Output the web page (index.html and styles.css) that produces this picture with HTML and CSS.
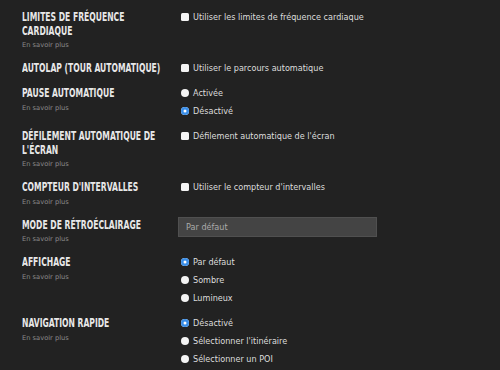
FILE: index.html
```html
<!DOCTYPE html>
<html lang="fr">
<head>
    <meta charset="UTF-8">
    <title>Paramètres d'activité</title>
    <link rel="stylesheet" href="styles.css">
</head>
<body>
    <div class="settings">
        <div class="row">
            <div class="label">
                <div class="title"><span>LIMITES DE FRÉQUENCE</span><span>CARDIAQUE</span></div>
                <a class="more" href="#">En savoir plus</a>
            </div>
            <div class="controls">
                <label class="option"><input type="checkbox"> Utiliser les limites de fréquence cardiaque</label>
            </div>
        </div>

        <div class="row">
            <div class="label">
                <div class="title"><span>AUTOLAP (TOUR AUTOMATIQUE)</span></div>
            </div>
            <div class="controls">
                <label class="option"><input type="checkbox"> Utiliser le parcours automatique</label>
            </div>
        </div>

        <div class="row">
            <div class="label">
                <div class="title"><span>PAUSE AUTOMATIQUE</span></div>
                <a class="more" href="#">En savoir plus</a>
            </div>
            <div class="controls">
                <label class="option"><input type="radio" name="pause"> Activée</label>
                <label class="option"><input type="radio" name="pause" checked> Désactivé</label>
            </div>
        </div>

        <div class="row">
            <div class="label">
                <div class="title"><span>DÉFILEMENT AUTOMATIQUE DE</span><span>L'ÉCRAN</span></div>
                <a class="more" href="#">En savoir plus</a>
            </div>
            <div class="controls">
                <label class="option"><input type="checkbox"> Défilement automatique de l'écran</label>
            </div>
        </div>

        <div class="row">
            <div class="label">
                <div class="title"><span>COMPTEUR D'INTERVALLES</span></div>
                <a class="more" href="#">En savoir plus</a>
            </div>
            <div class="controls">
                <label class="option"><input type="checkbox"> Utiliser le compteur d'intervalles</label>
            </div>
        </div>

        <div class="row">
            <div class="label">
                <div class="title"><span>MODE DE RÉTROÉCLAIRAGE</span></div>
                <a class="more" href="#">En savoir plus</a>
            </div>
            <div class="controls">
                <select class="select">
                    <option>Par défaut</option>
                </select>
            </div>
        </div>

        <div class="row">
            <div class="label">
                <div class="title"><span>AFFICHAGE</span></div>
                <a class="more" href="#">En savoir plus</a>
            </div>
            <div class="controls">
                <label class="option"><input type="radio" name="display" checked> Par défaut</label>
                <label class="option"><input type="radio" name="display"> Sombre</label>
                <label class="option"><input type="radio" name="display"> Lumineux</label>
            </div>
        </div>

        <div class="row">
            <div class="label">
                <div class="title"><span>NAVIGATION RAPIDE</span></div>
                <a class="more" href="#">En savoir plus</a>
            </div>
            <div class="controls">
                <label class="option"><input type="radio" name="nav" checked> Désactivé</label>
                <label class="option"><input type="radio" name="nav"> Sélectionner l'itinéraire</label>
                <label class="option"><input type="radio" name="nav"> Sélectionner un POI</label>
            </div>
        </div>
    </div>
</body>
</html>
```

FILE: styles.css
```css
body {
    margin: 0;
    background-color: #222222;
    font-family: "DejaVu Sans", sans-serif;
    color: #dddddd;
}
.settings {
    padding: 11px 0 0 22px;
}
.row {
    display: grid;
    grid-template-columns: 156px 1fr;
    margin-bottom: 10px;
}
/* condensed display face: squeeze the bold condensed sans */
.title {
    font-family: "DejaVu Sans Condensed", "DejaVu Sans", sans-serif;
    font-weight: bold;
    font-size: 12.3px;
    line-height: 13.5px;
    color: #e8e8e8;
    white-space: nowrap;
}
.title span {
    display: block;
    transform: scaleX(0.69);
    transform-origin: left center;
}
.more {
    display: block;
    font-size: 6.7px;
    line-height: 14px;
    color: #8a8a8a;
    text-decoration: none;
}
.controls {
    display: flex;
    flex-direction: column;
    align-items: flex-start;
    margin-top: -3px;
}
.option {
    display: flex;
    align-items: center;
    gap: 4px;
    height: 18px;
    font-size: 8.1px;
    color: #dddddd;
    white-space: nowrap;
}
.option input {
    appearance: none;
    margin: 0 0 0 3px;
    width: 8px;
    height: 8px;
    background-color: #f4f4f4;
}
.option input[type="checkbox"] {
    border-radius: 1.5px;
}
.option input[type="radio"] {
    border-radius: 50%;
}
.option input[type="radio"]:checked {
    background-color: #3a8ee8;
    box-shadow: inset 0 0 0 2.5px #3a8ee8, inset 0 0 0 4px #ffffff;
}
.select {
    appearance: none;
    margin-top: 1px;
    width: 199px;
    height: 20px;
    padding: 0 7px;
    background-color: #444444;
    border: 1px solid #505050;
    border-radius: 0;
    color: #aaaaaa;
    font-family: "DejaVu Sans", sans-serif;
    font-size: 8.1px;
}
```
